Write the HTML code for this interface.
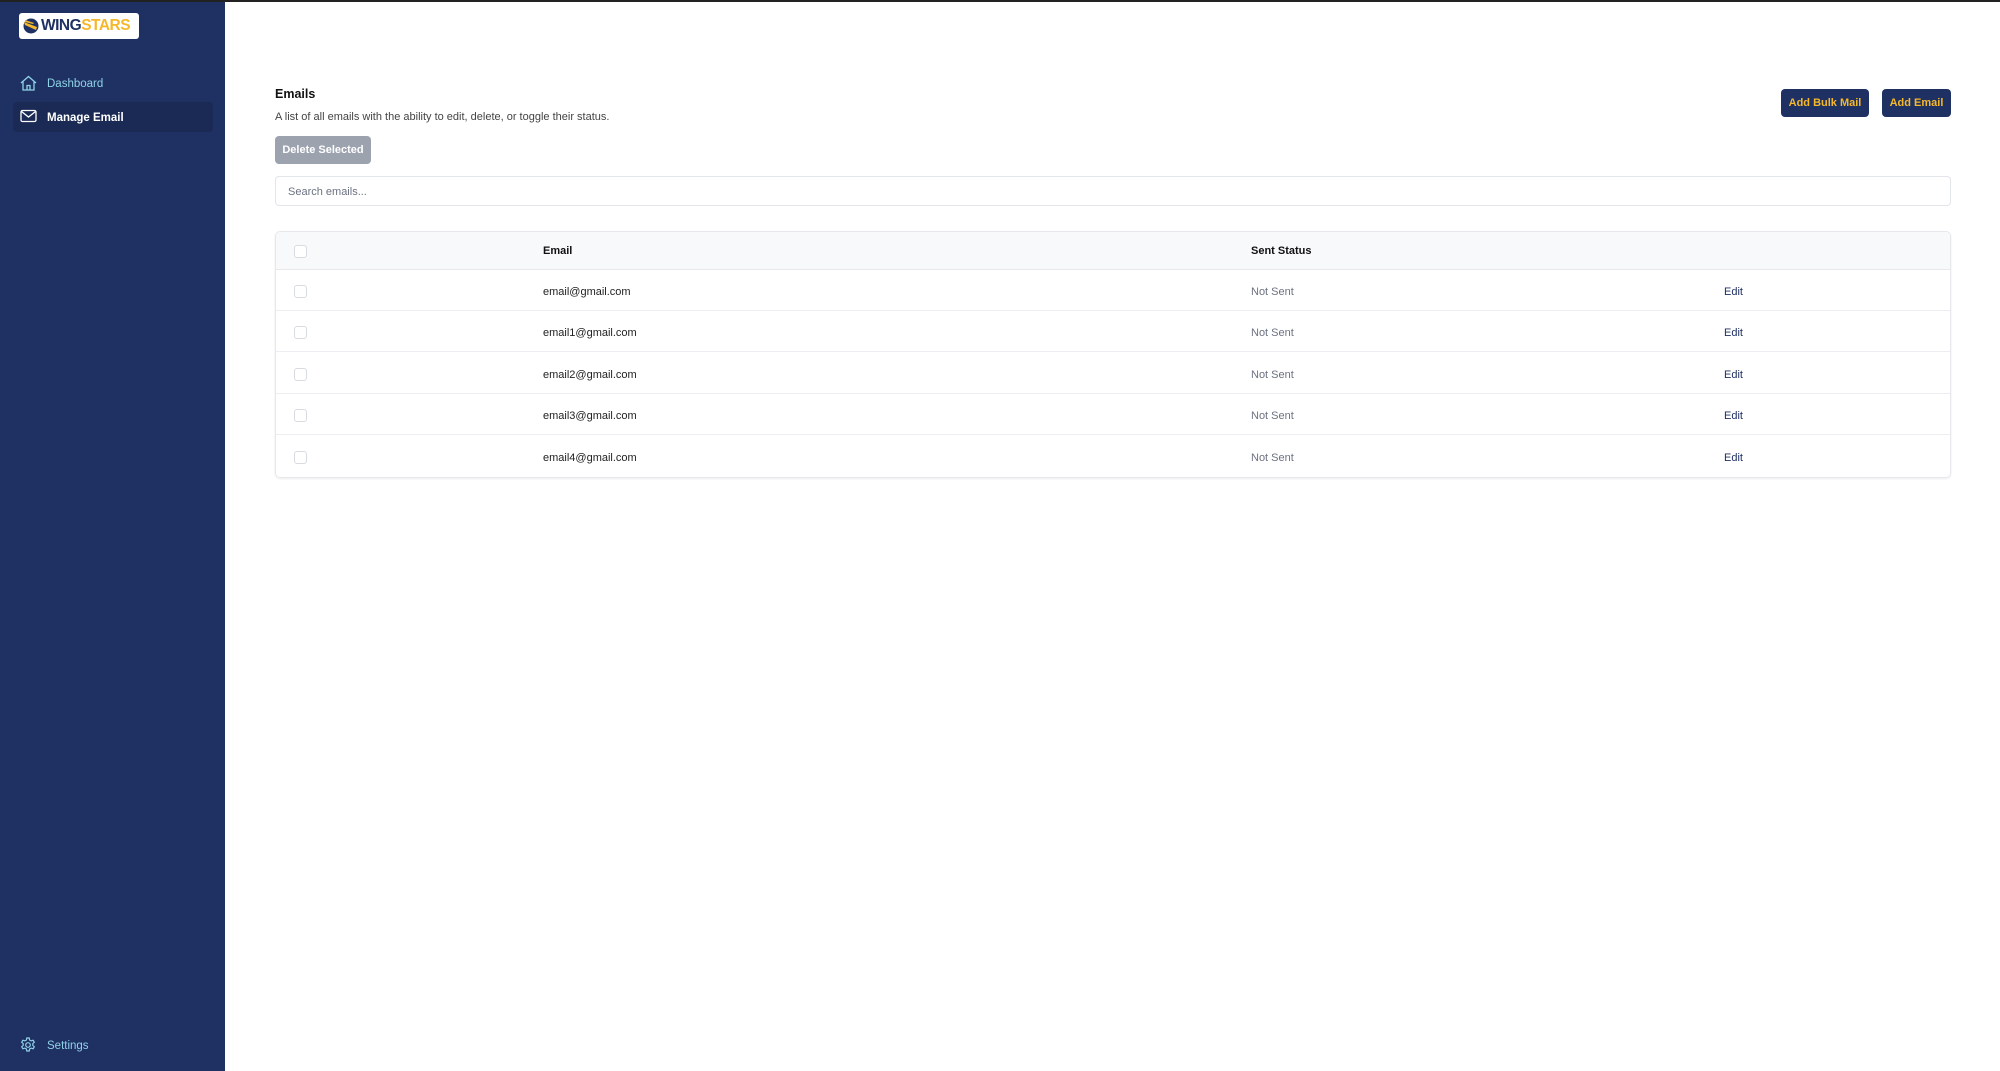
<!DOCTYPE html>
<html><head><meta charset="utf-8"><style>
*{box-sizing:border-box;margin:0;padding:0}
body{width:2000px;height:1071px;position:relative;background:#fff;font-family:"Liberation Sans",sans-serif;overflow:hidden}
.top{position:absolute;left:0;top:0;width:2000px;height:2px;background:#222;z-index:5}
.side{position:absolute;left:0;top:0;width:225px;height:1071px;background:#1f3163}
.logo{position:absolute;left:19px;top:13px;width:120px;height:26px;background:#fff;border-radius:3px;font-weight:bold;font-size:15.5px;line-height:26px;padding-left:22px;letter-spacing:-0.5px;color:#1f3163}
.logo span{color:#f5b82a}
.nav{position:absolute;left:13px;width:200px;height:30px;font-size:11.5px;line-height:32px;padding-left:34px}
.nav svg{position:absolute;left:7px;top:7px}
.t{position:absolute;white-space:nowrap}
.btn{position:absolute;height:28px;background:#1f3163;color:#f5b82a;font-size:11px;font-weight:bold;text-align:center;line-height:29px;border-radius:4px}
.cb{position:absolute;left:294px;width:13px;height:13px;border:1px solid #d8dce2;border-radius:3px;background:#fff}
.row{position:absolute;left:276px;width:1674px;border-top:1px solid #eceef1}
.e{position:absolute;left:543px;font-size:11px;color:#222}
.s{position:absolute;left:1251px;font-size:11px;color:#6b7280}
.ed{position:absolute;left:1724px;font-size:11px;color:#1f3163}
</style></head><body>
<div class="top"></div>
<div class="side">
<div class="logo"><svg style="position:absolute;left:3px;top:5px" width="18" height="16" viewBox="0 0 18 16"><circle cx="9" cy="8" r="7.5" fill="#1f3163"/><path d="M2 4 L15 9 L14 12 L3 7Z" fill="#f5b82a"/><path d="M3 2 L12 5 L11 6 L3 4Z" fill="#f5b82a"/></svg>WING<span>STARS</span></div>
<div class="nav" style="top:68px;color:#8fd3e8"><svg width="17" height="16" viewBox="0 0 17 16" fill="none" stroke="#8fd3e8" stroke-width="1.3"><path d="M1 8 L8.5 1.5 L16 8 M3 6.5 V15 H14 V6.5 M7 15 V10.5 H10 V15"/></svg>Dashboard</div>
<div class="nav" style="top:102px;background:#1a2a55;border-radius:4px;color:#fff;font-weight:bold"><svg width="17" height="14" viewBox="0 0 17 14" fill="none" stroke="#fff" stroke-width="1.3"><rect x="1" y="1.5" width="15" height="11" rx="1.5"/><path d="M1.5 2.5 L8.5 8 L15.5 2.5"/></svg>Manage Email</div>
<div class="nav" style="top:1030px;color:#8fd3e8"><svg width="16" height="16" viewBox="0 0 16 16" fill="none" stroke="#8fd3e8" stroke-width="1.2"><circle cx="8" cy="8" r="2.3"/><path d="M6.8 1h2.4l.4 2 1.6.9 1.9-.7 1.2 2.1-1.5 1.3v1.8l1.5 1.3-1.2 2.1-1.9-.7-1.6.9-.4 2H6.8l-.4-2-1.6-.9-1.9.7-1.2-2.1 1.5-1.3V6.6L1.7 5.3l1.2-2.1 1.9.7 1.6-.9z"/></svg>Settings</div>
</div>
<div class="t" style="left:275px;top:87px;font-size:12.5px;font-weight:bold;color:#111">Emails</div>
<div class="t" style="left:275px;top:111px;font-size:11px;color:#444">A list of all emails with the ability to edit, delete, or toggle their status.</div>
<div class="btn" style="left:275px;top:136px;width:96px;background:#9ca3af;color:#fff">Delete Selected</div>
<div class="btn" style="left:1781px;top:89px;width:88px">Add Bulk Mail</div>
<div class="btn" style="left:1882px;top:89px;width:69px">Add Email</div>
<div style="position:absolute;left:275px;top:176px;width:1676px;height:30px;border:1px solid #e2e5e9;border-radius:4px;font-size:11px;color:#6b7280;line-height:30px;padding-left:12px">Search emails...</div>
<div style="position:absolute;left:275px;top:231px;width:1676px;height:247px;border:1px solid #e6e8eb;border-radius:5px;box-shadow:0 1px 2px rgba(0,0,0,.08);overflow:hidden">
<div style="height:38px;background:#f8f9fa;border-bottom:1px solid #e6e8eb"></div></div>
<div class="cb" style="top:245px"></div>
<div class="t" style="left:543px;top:245px;font-size:11px;font-weight:bold;color:#111">Email</div>
<div class="t" style="left:1251px;top:245px;font-size:11px;font-weight:bold;color:#111">Sent Status</div>

<div class="cb" style="top:285px"></div><div class="t e" style="top:286px">email@gmail.com</div><div class="t s" style="top:286px">Not Sent</div><div class="t ed" style="top:286px">Edit</div>
<div class="row" style="top:310px"></div>
<div class="cb" style="top:326px"></div><div class="t e" style="top:327px">email1@gmail.com</div><div class="t s" style="top:327px">Not Sent</div><div class="t ed" style="top:327px">Edit</div>
<div class="row" style="top:351px"></div>
<div class="cb" style="top:368px"></div><div class="t e" style="top:369px">email2@gmail.com</div><div class="t s" style="top:369px">Not Sent</div><div class="t ed" style="top:369px">Edit</div>
<div class="row" style="top:393px"></div>
<div class="cb" style="top:409px"></div><div class="t e" style="top:410px">email3@gmail.com</div><div class="t s" style="top:410px">Not Sent</div><div class="t ed" style="top:410px">Edit</div>
<div class="row" style="top:434px"></div>
<div class="cb" style="top:451px"></div><div class="t e" style="top:452px">email4@gmail.com</div><div class="t s" style="top:452px">Not Sent</div><div class="t ed" style="top:452px">Edit</div>
</body></html>
